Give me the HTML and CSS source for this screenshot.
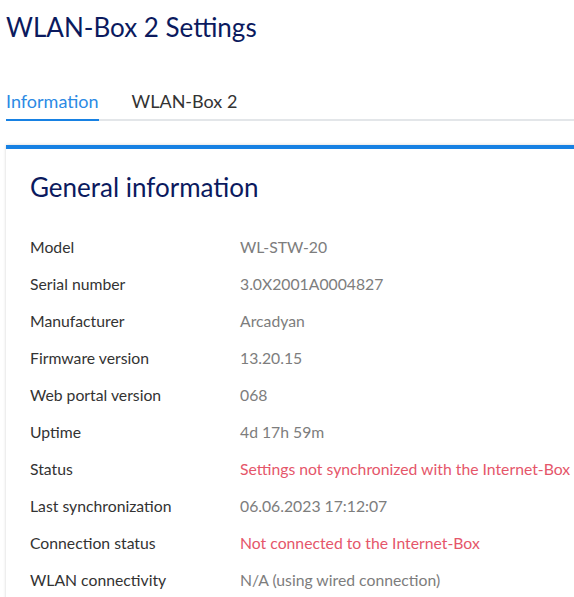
FILE: index.html
```html
<!DOCTYPE html>
<html lang="en">
<head>
<meta charset="utf-8">
<title>WLAN-Box 2 Settings</title>
<link rel="stylesheet" href="styles.css">
</head>
<body>
<div class="page">
  <h1 class="title">WLAN-Box 2 Settings</h1>
  <nav class="tabs">
    <a class="tab tab-active">Information</a>
    <a class="tab">WLAN-Box 2</a>
  </nav>
  <section class="card">
    <h2 class="card-title">General information</h2>
    <dl class="rows">
      <div class="row"><dt>Model</dt><dd>WL-STW-20</dd></div>
      <div class="row"><dt>Serial number</dt><dd>3.0X2001A0004827</dd></div>
      <div class="row"><dt>Manufacturer</dt><dd>Arcadyan</dd></div>
      <div class="row"><dt>Firmware version</dt><dd>13.20.15</dd></div>
      <div class="row"><dt>Web portal version</dt><dd>068</dd></div>
      <div class="row"><dt>Uptime</dt><dd>4d 17h 59m</dd></div>
      <div class="row"><dt>Status</dt><dd class="alert">Settings not synchronized with the Internet-Box</dd></div>
      <div class="row"><dt>Last synchronization</dt><dd>06.06.2023 17:12:07</dd></div>
      <div class="row"><dt>Connection status</dt><dd class="alert">Not connected to the Internet-Box</dd></div>
      <div class="row"><dt>WLAN connectivity</dt><dd>N/A (using wired connection)</dd></div>
    </dl>
  </section>
</div>
</body>
</html>
```
FILE: styles.css
```css
html, body {
  margin: 0;
  padding: 0;
  overflow: hidden;
  background: #ffffff;
}
body {
  font-family: Lato, "Open Sans", sans-serif;
  color: #333333;
}
.page {
  width: 780px;
  padding: 9px 0 0 6px;
}
.title {
  margin: 0;
  font-size: 26px;
  line-height: 36px;
  font-weight: 400;
  color: #0b1a5e;
}
.tabs {
  display: flex;
  gap: 33px;
  margin-top: 46px;
  border-bottom: 2px solid #e3e6e9;
}
.tab {
  display: block;
  font-size: 18px;
  line-height: 20px;
  padding-bottom: 8px;
  margin-bottom: -2px;
  border-bottom: 2px solid transparent;
  color: #333333;
}
.tab-active {
  color: #2c8ae4;
  border-bottom-color: #1781e3;
}
.card {
  margin: 24px 0 0 0;
  border-top: 4px solid #1781e3;
  box-shadow: 0 0 3px rgba(0, 0, 0, 0.18);
  background: #fff;
  padding: 21px 24px 20px 24px;
}
.card-title {
  margin: 0 0 24px 0;
  font-size: 26px;
  line-height: 34px;
  font-weight: 400;
  color: #0b1a5e;
}
.rows {
  margin: 0;
}
.row {
  display: grid;
  grid-template-columns: 210px 1fr;
  height: 37px;
  align-items: center;
  font-size: 15.75px;
  line-height: 18px;
}
.row dt {
  color: #333333;
}
.row dd {
  margin: 0;
  color: #7d7d7d;
}
.row dd.alert {
  color: #e5566a;
}
```
